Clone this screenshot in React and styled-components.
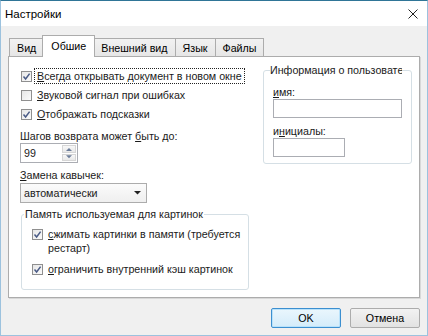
import styled, { createGlobalStyle } from "styled-components";

const GlobalStyle = createGlobalStyle`
  html, body {
    margin: 0;
    padding: 0;
    background: #f0f0f0;
  }
  body {
    font-family: "Liberation Sans", Arial, sans-serif;
    font-size: 10.7px;
    color: #1a1a1a;
  }
  * {
    box-sizing: border-box;
  }
`;

const Check = ({ checked }) => (
  <CheckBox>
    {checked && (
      <svg width="9" height="9" viewBox="0 0 9 9">
        <path
          d="M1.5 4.6 L3.6 7 L7.6 1.6"
          fill="none"
          stroke="#4a5b86"
          strokeWidth="1.5"
        />
      </svg>
    )}
  </CheckBox>
);

const Arrow = ({ up, color = "#222", size = 7 }) => (
  <svg width={size} height={size / 2 + 1} viewBox="0 0 8 5">
    <path d={up ? "M0 5 L4 1 L8 5 Z" : "M0 0 L8 0 L4 4 Z"} fill={color} />
  </svg>
);

const App = () => {
  return (
    <>
      <GlobalStyle />
      <Window>
        <TitleBar>
          <Title>Настройки</Title>
          <svg width="10" height="10" viewBox="0 0 10 10">
            <path d="M0.5 0.5 L9.5 9.5 M9.5 0.5 L0.5 9.5" stroke="#222" strokeWidth="1" />
          </svg>
        </TitleBar>
        <Body>
          <TabStrip>
            <Tab>Вид</Tab>
            <Tab $active>Обшие</Tab>
            <Tab>Внешний вид</Tab>
            <Tab>Язык</Tab>
            <Tab>Файлы</Tab>
          </TabStrip>
          <Panel>
            <LeftCol>
              <CheckRow>
                <Check checked />
                <Focused>
                  <Key>В</Key>сегда открывать документ в новом окне
                </Focused>
              </CheckRow>
              <CheckRow>
                <Check />
                <span>
                  <Key>З</Key>вуковой сигнал при ошибках
                </span>
              </CheckRow>
              <CheckRow>
                <Check checked />
                <span>
                  <Key>О</Key>тображать подсказки
                </span>
              </CheckRow>
              <FieldLabel>
                Шагов возврата может <Key>б</Key>ыть до:
              </FieldLabel>
              <Spinner>
                <SpinValue>99</SpinValue>
                <SpinButtons>
                  <SpinButton>
                    <Arrow up color="#6b7c99" size={6} />
                  </SpinButton>
                  <SpinButton>
                    <Arrow color="#6b7c99" size={6} />
                  </SpinButton>
                </SpinButtons>
              </Spinner>
              <FieldLabel>
                <Key>З</Key>амена кавычек:
              </FieldLabel>
              <Select>
                <SelectValue>автоматически</SelectValue>
                <SelectArrow>
                  <Arrow />
                </SelectArrow>
              </Select>
              <MemoryGroup>
                <GroupLegend>Память используемая для картинок</GroupLegend>
                <GroupBody>
                  <WrapRow>
                    <Check checked />
                    <RowText>
                      <Key>с</Key>жимать картинки в памяти (требуется
                      <br />
                      рестарт)
                    </RowText>
                  </WrapRow>
                  <WrapRow $gap={7}>
                    <Check checked />
                    <RowText>
                      <Key>о</Key>граничить внутренний кэш картинок
                    </RowText>
                  </WrapRow>
                </GroupBody>
              </MemoryGroup>
            </LeftCol>
            <UserGroup>
              <UserLegend>Информация о пользователе</UserLegend>
              <UserBody>
                <InputLabel>
                  <Key>и</Key>мя:
                </InputLabel>
                <TextInput $width={129} />
                <InputLabel $top={6}>
                  и<Key>н</Key>ициалы:
                </InputLabel>
                <TextInput $width={72} />
              </UserBody>
            </UserGroup>
          </Panel>
          <ButtonRow>
            <Button $primary>OK</Button>
            <Button>Отмена</Button>
          </ButtonRow>
        </Body>
      </Window>
    </>
  );
};

const Window = styled.div`
  width: 428px;
  height: 336px;
  display: flex;
  flex-direction: column;
  background: #f0f0f0;
  border: 1px solid #9cc2de;
  border-top-color: #2f7597;
`;

const TitleBar = styled.div`
  height: 25px;
  flex-shrink: 0;
  background: #ffffff;
  display: flex;
  align-items: center;
  justify-content: space-between;
  padding: 1px 9px 0 4px;
`;

const Title = styled.div`
  font-size: 11.5px;
  color: #000;
`;

const Body = styled.div`
  flex: 1;
  padding: 9px 7px 0 7px;
`;

const TabStrip = styled.div`
  height: 21px;
  display: flex;
  align-items: flex-end;
  padding-left: 1px;
`;

const Tab = styled.div`
  height: ${(p) => (p.$active ? "22px" : "18px")};
  display: flex;
  align-items: center;
  padding: ${(p) => (p.$active ? "0 8px 2px" : "0 7px")};
  margin-left: ${(p) => (p.$active ? "-2px" : "-1px")};
  margin-right: ${(p) => (p.$active ? "-1px" : "0")};
  margin-bottom: ${(p) => (p.$active ? "-1px" : "0")};
  border: 1px solid #acacac;
  border-bottom: none;
  background: ${(p) =>
    p.$active ? "#ffffff" : "linear-gradient(#f2f2f2, #e6e6e6)"};
  position: relative;
  z-index: ${(p) => (p.$active ? 2 : 1)};
  color: #000;

  &:first-child {
    margin-left: 0;
  }
`;

const Panel = styled.div`
  height: 242px;
  display: flex;
  gap: 14px;
  padding: 10px 7px 0 11px;
  background: #ffffff;
  border: 1px solid #acacac;
  box-shadow: 1px 1px 0 #d8d8d8;
`;

const LeftCol = styled.div`
  width: 229px;
  display: flex;
  flex-direction: column;
  align-items: flex-start;
`;

const CheckRow = styled.div`
  height: 18px;
  margin: 0 0 1px 1px;
  display: flex;
  align-items: center;
  gap: 5px;
  white-space: nowrap;
`;

const CheckBox = styled.span`
  width: 11px;
  height: 11px;
  flex-shrink: 0;
  display: inline-flex;
  align-items: center;
  justify-content: center;
  border: 1px solid #8f8f8f;
  background: linear-gradient(135deg, #e6e6e6, #fbfbfb);
`;

const Focused = styled.span`
  outline: 1px dotted #222;
  outline-offset: 1px;
  padding: 0 1px;
  margin-left: -1px;
`;

const Key = styled.span`
  text-decoration: underline;
`;

const FieldLabel = styled.div`
  margin-top: 5px;
  line-height: 14px;
`;

const Spinner = styled.div`
  width: 58px;
  height: 20px;
  display: flex;
  border: 1px solid #abadb3;
  background: #fff;
`;

const SpinValue = styled.div`
  flex: 1;
  padding: 3px 0 0 3px;
`;

const SpinButtons = styled.div`
  width: 15px;
  display: flex;
  flex-direction: column;
  padding: 1px 1px 1px 0;
  gap: 1px;
`;

const SpinButton = styled.div`
  flex: 1;
  display: flex;
  align-items: center;
  justify-content: center;
  border: 1px solid #d6d6d6;
  background: linear-gradient(#f8f8f8, #e9e9e9);
`;

const Select = styled.div`
  width: 127px;
  height: 20px;
  margin-top: 1px;
  display: flex;
  align-items: center;
  border: 1px solid #acacac;
  background: linear-gradient(#fbfbfb, #efefef);
`;

const SelectValue = styled.div`
  flex: 1;
  padding-left: 3px;
`;

const SelectArrow = styled.div`
  width: 17px;
  display: flex;
  justify-content: center;
  padding-top: 1px;
`;

const MemoryGroup = styled.fieldset`
  width: 228px;
  margin: 4px 0 0 1px;
  padding: 0 0 13px 0;
  border: 1px solid #d5dfe5;
  border-radius: 3px;
`;

const GroupLegend = styled.legend`
  margin-left: 2px;
  padding: 0 1px;
  line-height: 14px;
`;

const GroupBody = styled.div`
  padding: 6px 0 0 10px;
  display: flex;
  flex-direction: column;
`;

const WrapRow = styled.div`
  display: flex;
  align-items: flex-start;
  gap: 5px;
  margin-top: ${(p) => p.$gap || 0}px;
  line-height: 14px;

  & > span:first-child {
    margin-top: 2px;
  }
`;

const RowText = styled.span`
  white-space: nowrap;
`;

const UserGroup = styled.fieldset`
  width: 149px;
  height: 101px;
  margin: -4px 0 0 0;
  padding: 0;
  border: 1px solid #d5dfe5;
  border-radius: 3px;
`;

const UserLegend = styled.legend`
  margin-left: 6px;
  padding: 0;
  max-width: 132px;
  overflow: hidden;
  white-space: nowrap;
  line-height: 14px;
`;

const UserBody = styled.div`
  padding: 0 0 0 9px;
  display: flex;
  flex-direction: column;
  align-items: flex-start;
`;

const InputLabel = styled.div`
  margin-top: ${(p) => p.$top ?? 8}px;
  line-height: 14px;
`;

const TextInput = styled.div`
  width: ${(p) => p.$width}px;
  height: 19px;
  border: 1px solid #abadb3;
  background: #fff;
`;

const ButtonRow = styled.div`
  display: flex;
  justify-content: flex-end;
  gap: 9px;
  margin-top: 10px;
`;

const Button = styled.button`
  width: 70px;
  height: 20px;
  padding: 0;
  font-family: inherit;
  font-size: 10.7px;
  color: #000;
  border-radius: 2px;
  border: 1px solid ${(p) => (p.$primary ? "#3c8fd0" : "#acacac")};
  background: ${(p) =>
    p.$primary
      ? "linear-gradient(#eaf6fd, #d4ecfa)"
      : "linear-gradient(#f2f2f2, #e2e2e2)"};
  box-shadow: ${(p) => (p.$primary ? "inset 0 0 0 1px #b9e2fb" : "none")};
`;

export default App;
